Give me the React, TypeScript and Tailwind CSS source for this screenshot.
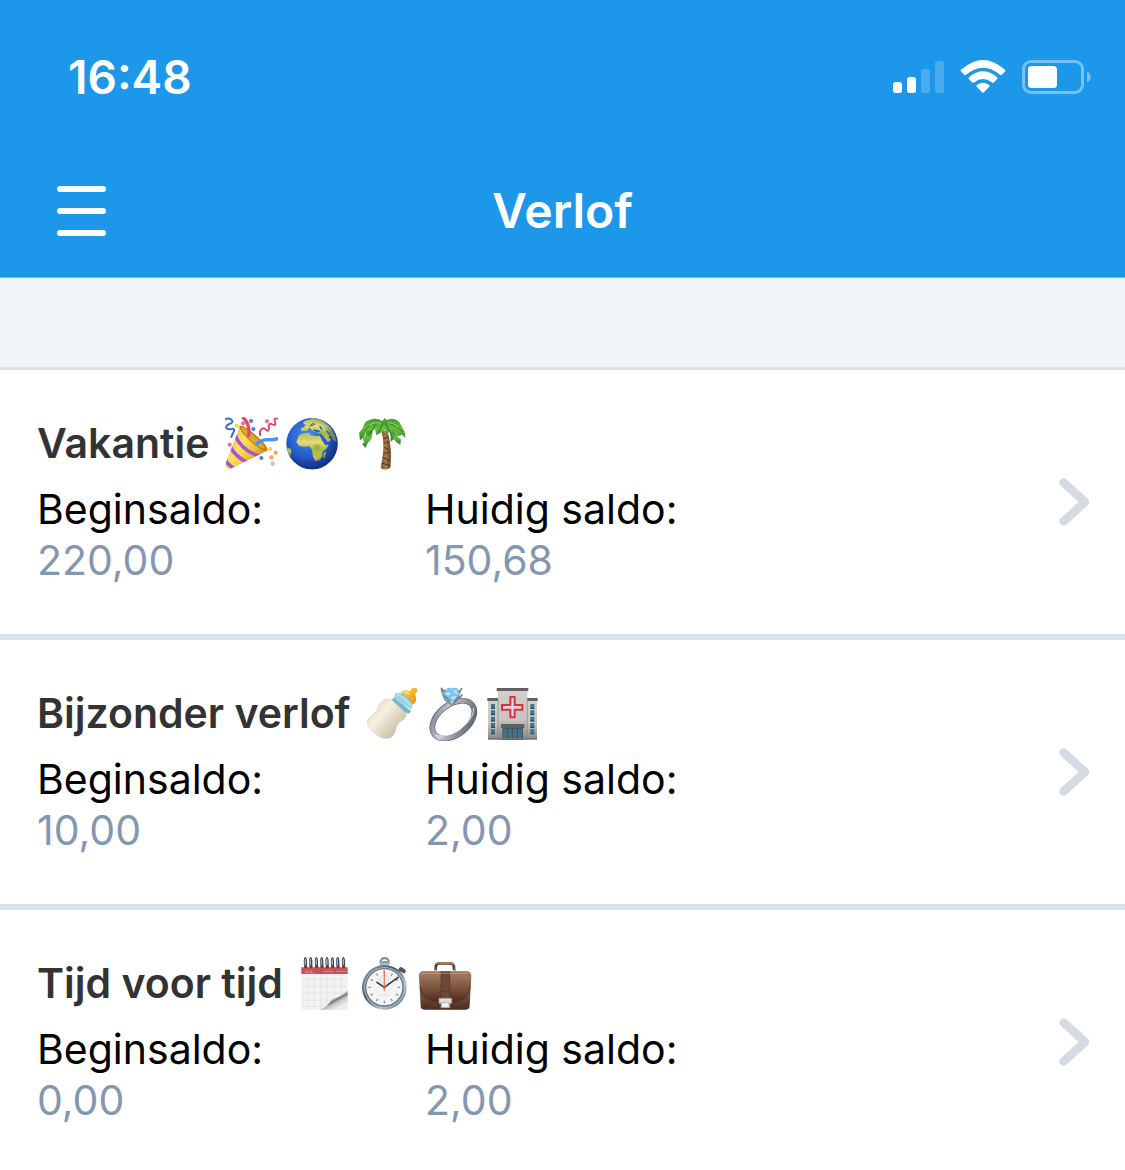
import type { ReactNode } from "react";

function Emoji({ label, className = "", children }: { label: string; className?: string; children: ReactNode }) {
  return (
    <svg role="img" aria-label={label} viewBox="0 0 162 162" className={`h-[54px] w-[54px] shrink-0 ${className}`}>
      {children}
    </svg>
  );
}

function PartyPopper() {
  return (
    <Emoji label="feest">
      <defs>
        <linearGradient id="cone" x1="0" y1="0.2" x2="1" y2="0.8">
          <stop offset="0" stopColor="#e0a52c" />
          <stop offset="0.35" stopColor="#ffe45e" />
          <stop offset="0.65" stopColor="#f0bd35" />
          <stop offset="1" stopColor="#b97a16" />
        </linearGradient>
        <clipPath id="coneClip">
          <path d="M48 28 L4 142 Q2 156 17 157 L132 100 Q80 82 48 28Z" />
        </clipPath>
      </defs>
      <path d="M48 28 L4 142 Q2 156 17 157 L132 100 Q80 82 48 28Z" fill="url(#cone)" />
      <g clipPath="url(#coneClip)" fill="none" stroke="#a455d8" strokeWidth="11">
        <path d="M32 52 Q52 102 108 118" />
        <path d="M18 88 Q35 120 70 136" />
        <path d="M2 124 Q12 146 34 156" />
      </g>
      <path d="M46 27 Q60 23 98 57 Q133 88 130 99 Q118 108 82 76 Q44 40 46 27Z" fill="#ba7d18" />
      <path d="M51 31 Q65 31 94 60 Q120 83 125 95 Q104 96 76 67 Q50 42 51 31Z" fill="#dca629" />
      <path d="M73 60 Q78 39 71 22 Q67 8 55 1" fill="none" stroke="#ee426e" strokeWidth="10" />
      <path d="M96 83 Q110 67 136 68 Q151 69 162 64" fill="none" stroke="#4c8ff0" strokeWidth="10" />
      <path d="M4 8 Q12 1 22 8 Q31 16 16 21 Q2 27 9 35 Q17 39 27 35 Q34 38 27 48 L21 62" fill="none" stroke="#386bd2" strokeWidth="6" />
      <path d="M109 57 Q105 42 112 37 Q117 31 124 36 Q133 48 135 34 Q132 18 143 21 Q157 29 153 15 Q148 1 162 5" fill="none" stroke="#df4672" strokeWidth="6" />
      <g stroke="#0002" strokeWidth="1">
        <g fill="#ffd743"><circle cx="38" cy="26" r="6" /><circle cx="138" cy="96" r="6" /></g>
        <g fill="#4187e6"><circle cx="81" cy="12" r="6" /><circle cx="88" cy="36" r="6" /><circle cx="112" cy="123" r="6" /></g>
        <g fill="#f36b9c"><circle cx="57" cy="19" r="6" /><circle cx="129" cy="13" r="6" /><circle cx="17" cy="83" r="6" /></g>
        <g fill="#f7a640"><circle cx="155" cy="107" r="6" /><circle cx="142" cy="121" r="6" /></g>
        <circle cx="146" cy="140" r="6" fill="#f4a2cc" />
      </g>
    </Emoji>
  );
}

function Globe() {
  return (
    <Emoji label="wereldbol">
      <defs>
        <radialGradient id="sea" cx="0.42" cy="0.35" r="0.65">
          <stop offset="0" stopColor="#438cef" />
          <stop offset="0.65" stopColor="#2459c9" />
          <stop offset="1" stopColor="#183a8d" />
        </radialGradient>
        <linearGradient id="land" x1="0" y1="0" x2="0" y2="1">
          <stop offset="0" stopColor="#a9bd5f" />
          <stop offset="0.35" stopColor="#e7d877" />
          <stop offset="0.6" stopColor="#9fbd4d" />
          <stop offset="1" stopColor="#dfbd4c" />
        </linearGradient>
        <radialGradient id="globeShade" cx="0.42" cy="0.42" r="0.58">
          <stop offset="0.65" stopColor="#10337d" stopOpacity="0" />
          <stop offset="1" stopColor="#10337d" stopOpacity="0.65" />
        </radialGradient>
        <clipPath id="globeClip"><circle cx="84" cy="80" r="77" /></clipPath>
      </defs>
      <circle cx="84" cy="80" r="77" fill="url(#sea)" />
      <g clipPath="url(#globeClip)" fill="url(#land)">
        <path d="M53 43 L50 34 61 31 64 22 56 18 66 10 78 8 84 3 105 5 123 16 142 33 154 55 157 75 148 69 140 53 133 60 142 69 132 75 120 60 113 50 101 49 98 42 91 46 83 38 75 32 70 41Z" />
        <path d="M45 55 L56 49 76 47 80 54 93 57 108 57 115 72 124 84 134 83 127 96 116 104 114 121 106 130 94 132 87 119 83 97 76 88 62 89 46 87 37 75Z" />
        <path d="M120 108 L127 103 122 123 116 119Z" />
        <path d="M8 91 L20 96 22 108 15 125 6 110Z" />
        <path d="M64 28 L60 19 66 15 68 26Z" />
      </g>
      <g fill="none" stroke="#2459bd" strokeLinecap="round">
        <path d="M77 28 L88 17 M83 26 L93 21" strokeWidth="3" />
        <path d="M91 40 L105 43" strokeWidth="5" />
        <path d="M108 29 L113 36 M110 56 L123 77" strokeWidth="4" />
        <path d="M129 43 L137 52" strokeWidth="4" />
      </g>
      <path d="M90 85 Q107 76 109 92 Q98 103 88 93Z" fill="#779e39" opacity="0.5" />
      <circle cx="84" cy="80" r="77" fill="url(#globeShade)" />
    </Emoji>
  );
}

function PalmTree() {
  return (
    <Emoji label="palmboom" className="ml-3">
      <defs>
        <linearGradient id="trunk" x1="0" y1="0" x2="1" y2="0">
          <stop offset="0" stopColor="#76502f" />
          <stop offset="0.5" stopColor="#a87c4e" />
          <stop offset="1" stopColor="#664121" />
        </linearGradient>
        <linearGradient id="leaf" x1="0" y1="0" x2="0" y2="1">
          <stop offset="0" stopColor="#3d9435" />
          <stop offset="0.45" stopColor="#6cbd3a" />
          <stop offset="1" stopColor="#247d2d" />
        </linearGradient>
      </defs>
      <path d="M76 43 Q89 83 74 153 Q88 163 103 152 Q109 91 94 41Z" fill="url(#trunk)" />
      <path d="M83 65 L97 60 M84 79 L100 74 M84 91 L101 99 M82 109 L103 106 M80 121 L102 131 M77 138 L103 146" stroke="#553316" strokeWidth="3" />
      <g fill="url(#leaf)">
        <path d="M79 12 Q58 0 38 10 Q24 15 21 32 L9 48 12 70 24 61 29 46 31 66 43 45 57 36 61 55 73 48 86 38 93 51 103 42 104 74 115 65 121 70 119 45 128 57 138 53 148 63 146 44 135 24 Q126 8 112 6 Q101 5 91 9 L87 3Z" />
        <path d="M50 40 L38 43 21 65 24 77 18 80 28 93 35 79 47 65Z" />
        <path d="M104 45 L124 51 126 61 135 67 133 83 121 76 109 60Z" />
      </g>
      <g fill="none" stroke="#247b24" strokeWidth="3">
        <path d="M77 16 Q46 16 25 42 M88 18 Q113 17 139 43 M81 20 L66 48 M88 20 L110 60 M60 22 L38 55" />
      </g>
      <path d="M75 18 Q54 14 38 26 M94 18 Q112 16 127 31" fill="none" stroke="#b2e568" strokeWidth="4" opacity="0.7" />
    </Emoji>
  );
}

function BabyBottle() {
  return (
    <Emoji label="babyfles">
      <defs>
        <linearGradient id="milk" x1="0" y1="0" x2="1" y2="0.9">
          <stop offset="0" stopColor="#d9d0bd" />
          <stop offset="0.4" stopColor="#f6f0df" />
          <stop offset="1" stopColor="#b9ad95" />
        </linearGradient>
        <linearGradient id="teat" x1="0" y1="0" x2="1" y2="1">
          <stop offset="0" stopColor="#ffd64b" />
          <stop offset="1" stopColor="#ed9200" />
        </linearGradient>
      </defs>
      <path d="M103 19 Q109 8 122 10 L134 13 Q134 3 145 2 Q156 3 154 13 L147 22 Q155 38 146 49 L136 53Z" fill="url(#teat)" />
      <path d="M53 38 Q67 35 79 36 Q98 47 119 69 L121 84 Q117 98 105 103 Q91 113 89 130 Q83 151 66 154 Q44 158 18 132 Q2 117 4 103 Q7 93 22 82 Q36 67 39 54Z" fill="url(#milk)" stroke="#c8bda8" />
      <path d="M83 31 L136 73 128 80 117 76 78 40Z" fill="#79b3cd" />
      <path d="M88 19 L100 17 Q121 24 140 52 L137 68 Q115 57 84 34Z" fill="#9bd4e7" />
      <path d="M93 22 Q117 29 137 60" fill="none" stroke="#c0e4ee" strokeWidth="4" />
      <path d="M104 22 Q126 29 140 50" fill="none" stroke="#6fa6bb" strokeWidth="2" />
      <path d="M119 16 L129 20" stroke="#fff0a0" strokeWidth="5" strokeLinecap="round" />
    </Emoji>
  );
}

function Ring() {
  return (
    <Emoji label="ring">
      <defs>
        <linearGradient id="silver" x1="0" y1="0" x2="1" y2="1">
          <stop offset="0" stopColor="#69717b" />
          <stop offset="0.35" stopColor="#c9cdd4" />
          <stop offset="0.65" stopColor="#8c929d" />
          <stop offset="1" stopColor="#4f5965" />
        </linearGradient>
      </defs>
      <ellipse cx="82" cy="98" rx="72" ry="45" transform="rotate(-38 82 98)" fill="none" stroke="#58606b" strokeWidth="17" />
      <ellipse cx="82" cy="98" rx="72" ry="45" transform="rotate(-38 82 98)" fill="none" stroke="url(#silver)" strokeWidth="13" />
      <path d="M28 146 Q78 156 119 113 Q145 85 143 63" fill="none" stroke="#dfe3e9" strokeWidth="3" />
      <path d="M46 8 L57 38 78 54 98 36 109 23" fill="none" stroke="#87919e" strokeWidth="6" />
      <path d="M54 10 L67 2 92 3 105 16 98 33 82 44 67 41 53 28Z" fill="#83c6ef" />
      <path d="M67 3 L77 16 92 4 98 25 81 41 70 28 55 25 62 13 77 16 70 28 98 25" fill="#b8e6fb" stroke="#6bbcec" strokeWidth="3" />
      <path d="M46 4 L56 14 M107 5 L100 14 M56 27 L70 40 M99 29 L86 43" stroke="#717e91" strokeWidth="5" strokeLinecap="round" />
    </Emoji>
  );
}

function Hospital() {
  return (
    <Emoji label="ziekenhuis">
      <defs>
        <linearGradient id="wall" x1="0" y1="0" x2="0" y2="1">
          <stop offset="0" stopColor="#d0d0ce" />
          <stop offset="0.6" stopColor="#c6c5c1" />
          <stop offset="1" stopColor="#8a8480" />
        </linearGradient>
      </defs>
      <path d="M6 38 H153 V158 H6Z" fill="url(#wall)" />
      <path d="M4 33 H36 V42 H4Z M121 33 H155 V42 H121Z" fill="#66615e" />
      <path d="M36 8 H124 V158 H36Z" fill="url(#wall)" />
      <path d="M36 42v116 M124 42v116" stroke="#8b8885" strokeWidth="2" />
      <path d="M32 3 H127 V12 H32Z" fill="#625f5e" />
      <path d="M73 30 H86 V54 H109 V68 H86 V91 H73 V68 H48 V54 H73Z" fill="#d9dce0" stroke="#e62d3c" strokeWidth="6" />
      {[51, 70, 89, 108, 127].map((y) => (
        <g key={y}>
          <path d={`M15 ${y}h12v14h-12ZM133 ${y}h12v14h-12Z`} fill="#39768f" />
          <path d={`M15 ${y + 13}h12M133 ${y + 13}h12`} stroke="#263d4e" strokeWidth="3" />
        </g>
      ))}
      <path d="M45 111 H115 V123 H45Z" fill="#635e5c" />
      <path d="M49 123 H111 V158 H49Z" fill="#33505f" />
      <path d="M51 125h13v33h-13Z M66 125h13v33h-13Z M81 125h13v33h-13Z M96 125h13v33h-13Z" fill="#466f84" />
      <path d="M6 155h147" stroke="#77736f" strokeWidth="4" />
    </Emoji>
  );
}

function Calendar() {
  return (
    <Emoji label="kalender">
      <defs>
        <linearGradient id="curl" x1="0.3" y1="0.25" x2="0.75" y2="0.85">
          <stop offset="0" stopColor="#ffffff" />
          <stop offset="0.35" stopColor="#d6d6d6" />
          <stop offset="0.5" stopColor="#777777" />
          <stop offset="0.65" stopColor="#c4c4c4" />
          <stop offset="1" stopColor="#ededed" />
        </linearGradient>
      </defs>
      <path d="M10 31 H149 V158 H10Z" fill="#f2f2f3" />
      <path d="M10 67h139 M10 87h139 M10 108h139 M10 129h105 M10 148h90 M29 52v106 M49 52v106 M68 52v106 M88 52v104 M109 52v92 M130 52v67" stroke="#dfdfe1" strokeWidth="2" />
      <path d="M10 31 H149 V51 H10Z" fill="#c6525a" />
      <path d="M24 40v5q0 4-4 3 M29 40v7q3 4 7 0v-7 M41 40v9h5 M78 43h28 M115 43h27" fill="none" stroke="#e8a7aa" strokeWidth="2" />
      {[23, 39, 56, 72, 88, 104, 120, 137].map((x) => (
        <g key={x}>
          <circle cx={x} cy="29" r="5" fill="#6c343a" />
          <path d={`M${x - 3} 26q-2-24 2-24q4 0 3 25`} fill="none" stroke="#39454f" strokeWidth="4" />
          <path d={`M${x - 2} 23q-1-17 1-18`} fill="none" stroke="#b6c1ca" strokeWidth="2" />
        </g>
      ))}
      <path d="M66 158 Q92 149 101 125 Q127 122 149 98 V158Z" fill="url(#curl)" />
    </Emoji>
  );
}

function Stopwatch() {
  return (
    <Emoji label="stopwatch">
      <defs>
        <linearGradient id="rim" x1="0" y1="0" x2="1" y2="1">
          <stop offset="0" stopColor="#9aabb9" />
          <stop offset="0.4" stopColor="#46586b" />
          <stop offset="0.7" stopColor="#b9c5d0" />
          <stop offset="1" stopColor="#465061" />
        </linearGradient>
      </defs>
      <circle cx="80" cy="15" r="12" fill="none" stroke="#8796a2" strokeWidth="7" />
      <path d="M73 13h15v19h-15Z" fill="#607080" />
      <path d="M70 17h21v8h-21Z" fill="#b6c0c8" />
      <path d="M119 44 L129 36" stroke="#718090" strokeWidth="9" />
      <path d="M129 37 L137 42" stroke="#4b5966" strokeWidth="13" strokeLinecap="round" />
      <circle cx="79" cy="91" r="67" fill="url(#rim)" />
      <circle cx="79" cy="91" r="61" fill="#a9b9c7" />
      <circle cx="79" cy="91" r="56" fill="#f3f4f3" stroke="#637582" strokeWidth="4" />
      {[0, 30, 60, 90, 120, 150, 180, 210, 240, 270, 300, 330].map((angle) => (
        <path key={angle} d="M79 43v8" stroke="#8d9497" strokeWidth="4" transform={`rotate(${angle} 79 91)`} />
      ))}
      <circle cx="79" cy="68" r="13" fill="none" stroke="#d1d5d7" strokeWidth="3" />
      <path d="M79 91 L57 76 M79 91 L120 61" stroke="#263d49" strokeWidth="5" strokeLinecap="round" />
      <path d="M79 101 V40" stroke="#ed7964" strokeWidth="4" />
      <circle cx="79" cy="91" r="4" fill="#d45c4b" />
      <path d="M65 114h28" stroke="#d4d5d5" strokeWidth="2" />
    </Emoji>
  );
}

function Briefcase() {
  return (
    <Emoji label="aktetas">
      <defs>
        <linearGradient id="leather" x1="0" y1="0" x2="0" y2="1">
          <stop offset="0" stopColor="#aa8063" />
          <stop offset="0.5" stopColor="#805640" />
          <stop offset="1" stopColor="#4d2b20" />
        </linearGradient>
      </defs>
      <path d="M53 40 V31 Q53 19 66 19 H95 Q108 19 108 32 V40" fill="none" stroke="#54382b" strokeWidth="8" />
      <path d="M56 23 Q57 18 66 18 H95 Q105 18 106 25" fill="none" stroke="#a77b56" strokeWidth="6" />
      <path d="M50 31v11 M111 31v11" stroke="#99938c" strokeWidth="4" />
      <path d="M17 43 Q4 42 3 56 L8 148 Q8 158 19 158 H144 Q154 158 155 148 L160 57 Q159 43 147 43Z" fill="url(#leather)" />
      <path d="M5 76 L8 99 Q16 132 54 135 H110 Q147 132 155 100 L158 75 V56 Q158 43 146 43 H17 Q4 43 4 57Z" fill="url(#leather)" />
      <path d="M6 88 Q11 130 54 134 H109 Q149 130 157 88" fill="none" stroke="#543224" strokeWidth="3" />
      <path d="M69 43h26v83h-26Z" fill="#6e4937" />
      <path d="M69 43v83 M95 43v83 M69 104h26" stroke="#4f3328" strokeWidth="2" />
      <path d="M63 124h38v15h-6v13h-26v-13h-6Z" fill="#dddcd8" stroke="#a39c95" strokeWidth="2" />
      <path d="M71 137h22v14h-22Z" fill="#f4f3ef" stroke="#aaa39a" strokeWidth="2" />
      <path d="M12 49h137" stroke="#c7a17f" strokeWidth="2" />
    </Emoji>
  );
}

type Leave = { name: string; start: string; current: string; icons: ReactNode };

const leaves: Leave[] = [
  { name: "Vakantie", start: "220,00", current: "150,68", icons: <><PartyPopper /><Globe /><PalmTree /></> },
  { name: "Bijzonder verlof", start: "10,00", current: "2,00", icons: <><BabyBottle /><Ring /><Hospital /></> },
  { name: "Tijd voor tijd", start: "0,00", current: "2,00", icons: <><Calendar /><Stopwatch /><Briefcase /></> },
];

function StatusIcons() {
  return (
    <div className="flex items-center gap-4" aria-hidden="true">
      <svg viewBox="0 0 51 34" className="h-[34px] w-[51px]" fill="#fff">
        <rect y="22" width="9" height="11" rx="2.5" />
        <rect x="14" y="17" width="9" height="16" rx="2.5" />
        <rect x="28" y="9" width="9" height="24" rx="2.5" opacity="0.2" />
        <rect x="42" y="1" width="9" height="32" rx="2.5" opacity="0.2" />
      </svg>
      <svg viewBox="0 0 46 34" className="h-[34px] w-[46px]" fill="#fff">
        <path d="M1.3 9.5Q23-9.5 44.7 9.5Q46 10.5 44.8 11.8L41.7 14.8Q41 15.6 40 14.8Q23 .5 6 14.8Q5 15.6 4.3 14.8L1.2 11.8Q0 10.5 1.3 9.5Z" />
        <path d="M9 17.2Q23 5.5 37 17.2Q38.1 18.2 37 19.3L33.8 22.4Q33 23.2 32 22.4Q23 15.6 14 22.4Q13 23.2 12.2 22.4L9 19.3Q7.9 18.2 9 17.2Z" />
        <path d="M16.8 25Q23 20.5 29.2 25Q30.2 25.8 29.2 26.8L23.7 32.4Q23 33 22.3 32.4L16.8 26.8Q15.8 25.8 16.8 25Z" />
      </svg>
      <svg viewBox="0 0 69 34" className="h-[34px] w-[69px]">
        <rect x="1.5" y="1.5" width="59" height="31" rx="7.5" fill="none" stroke="#fff" strokeOpacity="0.4" strokeWidth="3" />
        <rect x="6" y="6" width="29" height="22" rx="3.5" fill="#fff" />
        <path d="M65 11.500C70 14 70 20 65 22.500Z" fill="#fff" opacity="0.4" />
      </svg>
    </div>
  );
}

function LeaveRow({ name, start, current, icons }: Leave) {
  return (
    <li className="border-b-6 border-[#d8e2ed]">
      <a href="#" className="flex items-center bg-white py-12 pr-[35px] pl-[37px]">
        <div className="min-w-0 flex-1">
          <div className="flex h-[51px] items-center gap-[6px]">
            <h2 className="mr-[9px] whitespace-nowrap text-[41px] leading-[51px] font-semibold text-[#333]">{name}</h2>
            {icons}
          </div>
          <dl className="mt-[15px] flex text-[41px] leading-[51px]">
            <div className="w-[388px]">
              <dt className="text-black">Beginsaldo:</dt>
              <dd className="text-[#8497b0]">{start}</dd>
            </div>
            <div>
              <dt className="text-black">Huidig saldo:</dt>
              <dd className="text-[#8497b0]">{current}</dd>
            </div>
          </dl>
        </div>
        <svg viewBox="0 0 32 50" className="h-[50px] w-8 shrink-0" fill="none" stroke="#d4dbe3" strokeWidth="8.500" strokeLinecap="round" strokeLinejoin="round" aria-hidden="true">
          <path d="M5.500 5.500L27 25L5.500 44.500" />
        </svg>
      </a>
    </li>
  );
}

export default function App() {
  return (
    <div className="min-h-screen overflow-x-hidden bg-white font-['Inter',sans-serif]">
      <header className="bg-[#1c97ea] pb-[34px] text-white">
        <div className="flex items-center justify-between pt-12 pr-[34px] pl-[68px]">
          <time className="text-[46px] leading-[58px] font-semibold">16:48</time>
          <StatusIcons />
        </div>
        <div className="mt-[73px] grid grid-cols-[1fr_auto_1fr] items-center px-[57px]">
          <button type="button" aria-label="Menu" className="flex w-[49px] flex-col gap-4">
            <span className="h-[6px] rounded-full bg-white" />
            <span className="h-[6px] rounded-full bg-white" />
            <span className="h-[6px] rounded-full bg-white" />
          </button>
          <h1 className="text-[48px] leading-[64px] font-semibold">Verlof</h1>
        </div>
      </header>
      <div className="h-[93px] border-t border-b-3 border-t-[#a3abb0] border-b-[#d8e2ed] bg-[#f0f4f8]" />
      <main>
        <ul>
          {leaves.map((leave) => (
            <LeaveRow key={leave.name} {...leave} />
          ))}
        </ul>
      </main>
    </div>
  );
}
